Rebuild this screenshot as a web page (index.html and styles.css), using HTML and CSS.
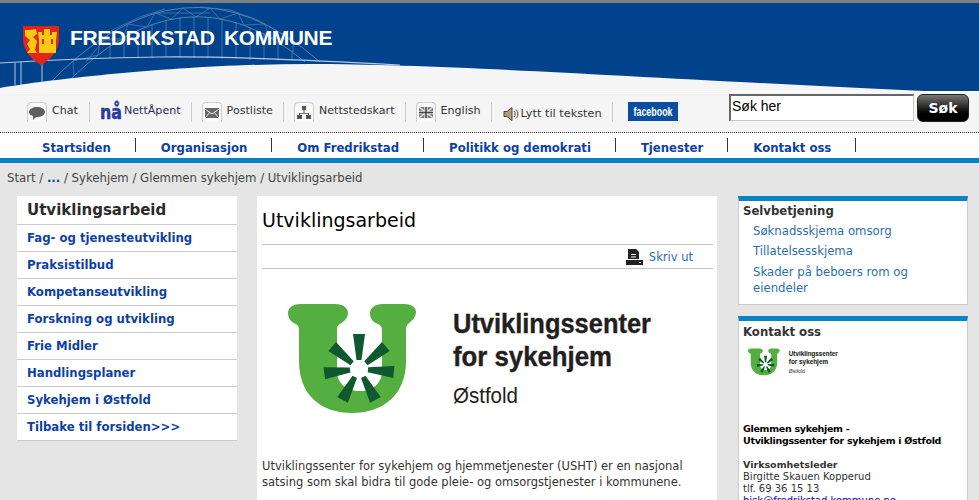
FILE: index.html
```html
<!DOCTYPE html>
<html lang="no">
<head>
<meta charset="utf-8">
<title>Utviklingsarbeid</title>
<link rel="stylesheet" href="styles.css">
</head>
<body>
<svg class="defs" width="0" height="0">
  <defs>
    <symbol id="ulogo" viewBox="0 0 364 112">
      <path fill="#54ae40" d="M13 1H47C55 1 60 5 60 10C60 16 55 19 52 21C49 23 49 25 49 28V68C49 80 58 88 72 88C85 88 94 80 94 68V28C94 25 94 23 90 21C85 19 82 16 82 10C82 5 87 1 95 1H116C123 1 128 4 128 9C128 15 122 19 120 21C118 23 118 25 118 28V58C118 92 95 110 64 110C33 110 11 92 11 58V28C11 25 11 23 8 21C3 19 0 15 0 10C0 4 6 1 13 1Z"/>
      <g fill="#10592f" transform="translate(71 66)">
        <polygon points="-2.5,-9 2.5,-9 6,-35 -6,-35"/>
        <polygon points="-2.5,-9 2.5,-9 6,-35 -6,-35" transform="rotate(50)"/>
        <polygon points="-2.5,-9 2.5,-9 6,-35 -6,-35" transform="rotate(95)"/>
        <polygon points="-2.5,-9 2.5,-9 6,-35 -6,-35" transform="rotate(152)"/>
        <polygon points="-2.5,-9 2.5,-9 6,-35 -6,-35" transform="rotate(208)"/>
        <polygon points="-2.5,-9 2.5,-9 6,-35 -6,-35" transform="rotate(263)"/>
        <polygon points="-2.5,-9 2.5,-9 6,-35 -6,-35" transform="rotate(310)"/>
      </g>
      <text class="lg-b" x="165" y="30" textLength="198" lengthAdjust="spacingAndGlyphs">Utviklingssenter</text>
      <text class="lg-b" x="165" y="63" textLength="159" lengthAdjust="spacingAndGlyphs">for sykehjem</text>
      <text class="lg-r" x="165" y="100" textLength="65" lengthAdjust="spacingAndGlyphs">Østfold</text>
    </symbol>
  </defs>
</svg>

<header class="banner">
  <svg class="banner-art" width="979" height="88" viewBox="0 3 979 88">
    <rect x="0" y="3" width="979" height="88" fill="#00428c"/>
    <g fill="none" stroke="#a9bcdc" stroke-width="1" opacity=".5">
      <path d="M45 88Q183 -59 320 62"/>
      <path d="M62 88Q183 -40 305 62"/>
      <path stroke-width=".7" d="M74 76L73 61L98 55L100 40L123 38L128 24L147 27L155 13L171 19L183 8L196 17L210 8L220 19L238 13L244 25L265 24L269 37L293 40L293 52"/>
      <path stroke-width=".7" d="M86 62L112 30L140 17L165 9M200 7L230 10L258 20L282 34M100 40H135M155 13H210"/>
      <path stroke-width=".8" d="M110 44V58M124 38V57M138 30V57M152 24V57M166 20V57M180 17V57M194 17V58M208 18V58M222 19V59M236 22V59M250 27V60M264 33V60M278 40V61M292 50V61"/>
    </g>
    <g fill="none" stroke="#b8c8e0">
      <path stroke-width="1.200" d="M0 63Q80 58 160 57T400 65"/>
      <path d="M15 63V85M21 62V85M42 61V86"/>
    </g>
    <path fill="#f5f5f5" d="M0 88C60 78 190 64 310 64C450 64 640 78 924 91H0Z"/>
  </svg>
  <svg class="crest" width="36" height="40" viewBox="0 0 36 40">
    <path fill="#e0261c" d="M0 0H36V13C36 25 27 34 18 39C9 34 0 25 0 13Z"/>
    <path fill="#fcc910" d="M16 27V14L15 6H19V9H21V3H27V9H29V6H34L33 14V27Z"/>
    <path fill="#e0261c" d="M19 13H21V18H19ZM28 13H30V18H28Z"/>
    <path fill="#fcc910" d="M2 4H7L13 3L14 8L10 11L14 15L12 24L14 27H4L7 23L4 18L7 14L2 10Z"/>
  </svg>
  <div class="site-name">FREDRIKSTAD KOMMUNE</div>
</header>

<div class="toolbar">
  <a class="tool tool-first"><span class="ico"><svg width="18" height="16" viewBox="0 0 18 16"><path fill="#5f5f5f" d="M1 7C1 4 5 2 9 2S17 4 17 7 13 12 9 12H8L5 15V11C2 10 1 9 1 7Z"/></svg></span><span>Chat</span></a>
  <a class="tool"><svg class="naa" width="22" height="20" viewBox="0 0 22 20"><text class="naa-t" x="0" y="17" textLength="22" lengthAdjust="spacingAndGlyphs">nå</text></svg><span class="naa-l">NettÅpent</span></a>
  <a class="tool"><span class="ico"><svg width="14" height="10" viewBox="0 0 14 10"><rect width="14" height="10" fill="#666"/><path fill="none" stroke="#eee" d="M0 1L7 6L14 1M0 10L5 4M14 10L9 4"/></svg></span><span>Postliste</span></a>
  <a class="tool"><span class="ico"><svg width="14" height="13" viewBox="0 0 14 13"><path fill="#555" d="M5 0H9V4H5ZM6.500 4H7.500V7H12V9H11V7.700H3V9H2V7H6.500ZM0 9H5V13H0ZM9 9H14V13H9Z"/></svg></span><span>Nettstedskart</span></a>
  <a class="tool"><span class="ico"><svg width="14" height="11" viewBox="0 0 14 11"><rect width="14" height="11" fill="#777"/><path stroke="#ddd" stroke-width="1.500" d="M0 0L14 11M14 0L0 11"/><path stroke="#ddd" stroke-width="3.500" d="M7 0V11M0 5.500H14"/><path stroke="#444" stroke-width="1.500" d="M7 0V11M0 5.500H14"/></svg></span><span>English</span></a>
  <a class="tool tool-audio"><svg width="16" height="16" viewBox="0 0 16 16"><path fill="#b79b76" stroke="#444" d="M1 5.500H4L9 1.500V14.500L4 10.500H1Z"/><path fill="none" stroke="#444" d="M11 5C12.500 6.500 12.500 9.500 11 11M13 3.500C15.500 6 15.500 10 13 12.500"/></svg><span>Lytt til teksten</span></a>
  <a class="fb"><svg width="50" height="19" viewBox="0 0 50 19"><text class="fb-t" x="5.500" y="14" textLength="39" lengthAdjust="spacingAndGlyphs">facebook</text></svg></a>
  <form class="search">
    <input class="search-input" type="text" value="Søk her">
    <button class="search-btn" type="button">Søk</button>
  </form>
</div>

<nav class="mainnav">
  <a>Startsiden</a>
  <a>Organisasjon</a>
  <a>Om Fredrikstad</a>
  <a>Politikk og demokrati</a>
  <a>Tjenester</a>
  <a>Kontakt oss</a>
</nav>

<div class="crumbs">Start / <b>...</b> / Sykehjem / Glemmen sykehjem / Utviklingsarbeid</div>

<div class="columns">
  <aside class="sidemenu">
    <h2>Utviklingsarbeid</h2>
    <a>Fag- og tjenesteutvikling</a>
    <a>Praksistilbud</a>
    <a>Kompetanseutvikling</a>
    <a>Forskning og utvikling</a>
    <a>Frie Midler</a>
    <a>Handlingsplaner</a>
    <a>Sykehjem i Østfold</a>
    <a>Tilbake til forsiden&gt;&gt;&gt;</a>
  </aside>

  <main class="content">
    <h1>Utviklingsarbeid</h1>
    <div class="printbar">
      <svg width="17" height="16" viewBox="0 0 17 16"><path fill="#222" d="M2 0H10L13 3V10H2ZM0 11H17V16H0Z"/><path fill="#fff" d="M5 5H10V6H5ZM5 7.500H10V8.500H5ZM13 13H15V14H13Z"/></svg>
      <a>Skriv ut</a>
    </div>
    <svg class="biglogo" width="364" height="112"><use href="#ulogo"/></svg>
    <p>Utviklingssenter for sykehjem og hjemmetjenester (USHT) er en nasjonal satsing som skal bidra til gode pleie- og omsorgstjenester i kommunene.</p>
  </main>

  <aside class="rightcol">
    <section class="box">
      <h3>Selvbetjening</h3>
      <ul>
        <li>Søknadsskjema omsorg</li>
        <li>Tillatelsesskjema</li>
        <li>Skader på beboers rom og eiendeler</li>
      </ul>
    </section>
    <section class="box">
      <h3>Kontakt oss</h3>
      <svg class="smalllogo" width="90" height="28"><use href="#ulogo" width="90" height="28"/></svg>
      <p class="c-org">Glemmen sykehjem -<br>Utviklingssenter for sykehjem i Østfold</p>
      <p class="c-p"><b>Virksomhetsleder</b><br>Birgitte Skauen Kopperud<br>tlf. 69 36 15 13<br><a>bjsk@fredrikstad.kommune.no</a></p>
    </section>
  </aside>
</div>
</body>
</html>
```
FILE: styles.css
```css
* { box-sizing: border-box; }
html, body { margin: 0; height: 500px; overflow: hidden; }
body {
  display: flex;
  flex-direction: column;
  background: #e5e5e5;
  font-family: "DejaVu Sans", Verdana, sans-serif;
  font-size: 11.500px;
  color: #333;
}
.defs { position: absolute; }
.lg-b { font-family: "Liberation Sans", sans-serif; font-weight: bold; font-size: 28.500px; fill: #231f20; stroke: #231f20; stroke-width: .4px; }
.lg-r { font-family: "Liberation Sans", sans-serif; font-size: 22px; fill: #231f20; }

.banner {
  position: relative;
  flex: none;
  height: 91px;
  border-top: 3px solid #808080;
  background: #00428c;
}
.banner-art { display: block; }
.crest { position: absolute; left: 23px; top: 23px; }
.site-name {
  position: absolute;
  left: 70px;
  top: 22px;
  font-family: "Liberation Sans", Arial, sans-serif;
  font-weight: bold;
  font-size: 21px;
  line-height: 26px;
  letter-spacing: -.4px;
  color: #fff;
  word-spacing: 4px;
  white-space: nowrap;
}

.toolbar {
  flex: none;
  display: flex;
  align-items: flex-start;
  height: 42px;
  padding: 0 10px 0 27px;
  background: #f5f5f5;
  border-top: 1px solid #fff;
  border-bottom: 1px dotted #333;
}
.tool {
  display: flex;
  gap: 5px;
  height: 20px;
  margin-top: 10px;
  padding: 0 10px;
  border-right: 1px solid #ccc;
  font-size: 11.100px;
  line-height: 17px;
  color: #333;
  white-space: nowrap;
}
.tool-first { padding: 0 11px 0 0; }
.ico {
  display: flex;
  align-items: center;
  justify-content: center;
  width: 20px;
  height: 20px;
  border: 1px solid #ccc;
  border-bottom: 0;
  border-radius: 4px 4px 0 0;
  background: #fafafa;
}
.naa { margin-right: -3px; overflow: visible; }
.naa-t { font-family: "DejaVu Sans", sans-serif; font-weight: bold; font-size: 20px; fill: #2a3b9c; stroke: #2a3b9c; stroke-width: .5px; }
.naa-l { color: #2b2b55; }
.tool-audio { gap: 2px; padding-left: 11px; font-size: 11.300px; line-height: 24px; }
.tool-audio svg { margin-top: 4px; }
.fb {
  display: block;
  width: 50px;
  height: 19px;
  margin: 10px 0 0 15px;
  background: #0a4ea0;
}
.fb svg { display: block; overflow: visible; }
.fb-t { font-family: "Liberation Sans", sans-serif; font-weight: bold; font-size: 13px; fill: #fff; }
.search {
  display: flex;
  gap: 3px;
  margin: 2px 0 0 auto;
}
.search-input {
  width: 185px;
  height: 27px;
  padding: 0 1px 4px;
  border: 1px solid #ccc9c0;
  border-top: 2px solid #666;
  border-left: 2px solid #666;
  background: #fff;
  font-family: "Liberation Sans", Arial, sans-serif;
  font-size: 14px;
  color: #000;
}
.search-btn {
  width: 52px;
  height: 28px;
  padding: 0;
  border: 1px solid #222;
  border-radius: 6px;
  background: linear-gradient(#777, #000 70%);
  font-family: "DejaVu Sans", sans-serif;
  font-weight: bold;
  font-size: 14px;
  color: #fff;
}

.mainnav {
  flex: none;
  display: flex;
  align-items: flex-start;
  height: 30px;
  padding: 5px 0 0 17px;
  background: #fff;
  border-bottom: 5px solid #0a80c4;
}
.mainnav a {
  height: 14px;
  padding: 0 24px 0 25px;
  border-right: 1px solid #333;
  font-weight: bold;
  font-size: 11.700px;
  line-height: 20px;
  color: #0e3fa6;
  white-space: nowrap;
}

.crumbs {
  flex: none;
  height: 33px;
  padding: 7px 0 0 7px;
  font-size: 11.700px;
  line-height: 16px;
  color: #444;
}
.crumbs b { color: #0e3fa6; }

.columns {
  flex: 1;
  min-height: 0;
  display: flex;
  align-items: stretch;
  padding-left: 17px;
  overflow: hidden;
}
.sidemenu {
  flex: none;
  align-self: flex-start;
  width: 220px;
  background: #fff;
}
.sidemenu h2 {
  margin: 0;
  height: 29px;
  padding-left: 10px;
  border-bottom: 1px solid #ccc;
  font-size: 15px;
  line-height: 28px;
  color: #2b2b2b;
}
.sidemenu a {
  display: block;
  height: 27px;
  padding-left: 10px;
  border-bottom: 1px solid #ccc;
  font-weight: bold;
  font-size: 11.700px;
  line-height: 26px;
  color: #0e3fa6;
}

.content {
  flex: none;
  width: 460px;
  margin-left: 20px;
  padding: 0 4px 0 5px;
  background: #fff;
}
.content h1 {
  margin: 0;
  height: 49px;
  border-bottom: 1px solid #c4c4c4;
  font-weight: normal;
  font-size: 19px;
  line-height: 48px;
  color: #000;
}
.printbar {
  display: flex;
  justify-content: flex-end;
  align-items: center;
  gap: 6px;
  height: 24px;
  padding-right: 20px;
  border-bottom: 1px solid #c4c4c4;
}
.printbar a { color: #2a6fb0; }
.biglogo { display: block; margin: 34px 0 0 26px; }
.content p {
  margin: 43px 0 0;
  line-height: 16px;
  color: #333;
}

.rightcol { flex: none; width: 230px; margin-left: 21px; }
.box {
  margin-bottom: 11px;
  padding: 1px 4px 8px;
  background: #fff;
  border: 1px solid #ccc;
  border-top: 5px solid #0a84c6;
}
.box + .box { padding-top: 2px; }
.box h3 {
  margin: 0;
  font-size: 11.700px;
  line-height: 18px;
  color: #333;
}
.box ul {
  margin: 0;
  padding: 0 30px 0 10px;
  list-style: none;
  font-size: 11.700px;
  color: #2a6fb0;
}
.box li { margin-top: 3px; line-height: 16px; }
.box li + li { margin-top: 4px; }
.box li + li + li { margin-top: 5px; }
.smalllogo { display: block; margin: 7px 0 0 5px; }
.c-org, .c-p { margin: 0; line-height: 12px; }
.c-org { margin-top: 47px; font-size: 9.500px; letter-spacing: -.3px; color: #000; font-weight: bold; white-space: nowrap; }
.c-p { margin-top: 12px; font-size: 10px; }
.c-p b { font-size: 9.500px; }
.c-p a { color: #00d; text-decoration: underline; }
```
